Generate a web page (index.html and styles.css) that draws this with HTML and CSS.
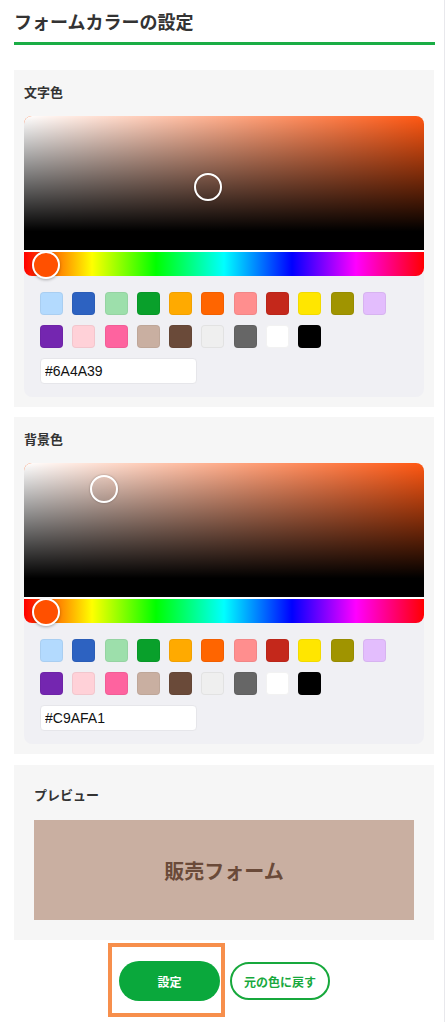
FILE: index.html
```html
<!DOCTYPE html>
<html lang="ja">
<head>
<meta charset="utf-8">
<title>フォームカラーの設定</title>
<link rel="stylesheet" href="styles.css">
</head>
<body>
<div class="page">
  <h1 class="title">フォームカラーの設定</h1>

  <section class="card">
    <h2 class="label">文字色</h2>
    <div class="picker">
      <div class="sat">
        <span class="sat-thumb" style="left:184px; top:71px;"></span>
      </div>
      <div class="hue">
        <span class="hue-thumb"></span>
      </div>
      <div class="swatches">
        <span class="sw" style="background:#b3dafe"></span>
        <span class="sw" style="background:#2d62c1"></span>
        <span class="sw" style="background:#9ddfab"></span>
        <span class="sw" style="background:#09a02b"></span>
        <span class="sw" style="background:#ffaa00"></span>
        <span class="sw" style="background:#ff6500"></span>
        <span class="sw" style="background:#ff8e8e"></span>
        <span class="sw" style="background:#c4281b"></span>
        <span class="sw" style="background:#ffe600"></span>
        <span class="sw" style="background:#a09400"></span>
        <span class="sw" style="background:#e3bdfd"></span>
        <span class="sw" style="background:#7426b0"></span>
        <span class="sw" style="background:#ffd1d8"></span>
        <span class="sw" style="background:#fe639f"></span>
        <span class="sw" style="background:#c9afa1"></span>
        <span class="sw" style="background:#6a4a39"></span>
        <span class="sw" style="background:#efefef"></span>
        <span class="sw" style="background:#666666"></span>
        <span class="sw" style="background:#ffffff"></span>
        <span class="sw" style="background:#000000"></span>
      </div>
      <input class="hex" type="text" value="#6A4A39">
    </div>
  </section>

  <section class="card">
    <h2 class="label">背景色</h2>
    <div class="picker">
      <div class="sat">
        <span class="sat-thumb" style="left:80px; top:26px;"></span>
      </div>
      <div class="hue">
        <span class="hue-thumb"></span>
      </div>
      <div class="swatches">
        <span class="sw" style="background:#b3dafe"></span>
        <span class="sw" style="background:#2d62c1"></span>
        <span class="sw" style="background:#9ddfab"></span>
        <span class="sw" style="background:#09a02b"></span>
        <span class="sw" style="background:#ffaa00"></span>
        <span class="sw" style="background:#ff6500"></span>
        <span class="sw" style="background:#ff8e8e"></span>
        <span class="sw" style="background:#c4281b"></span>
        <span class="sw" style="background:#ffe600"></span>
        <span class="sw" style="background:#a09400"></span>
        <span class="sw" style="background:#e3bdfd"></span>
        <span class="sw" style="background:#7426b0"></span>
        <span class="sw" style="background:#ffd1d8"></span>
        <span class="sw" style="background:#fe639f"></span>
        <span class="sw" style="background:#c9afa1"></span>
        <span class="sw" style="background:#6a4a39"></span>
        <span class="sw" style="background:#efefef"></span>
        <span class="sw" style="background:#666666"></span>
        <span class="sw" style="background:#ffffff"></span>
        <span class="sw" style="background:#000000"></span>
      </div>
      <input class="hex" type="text" value="#C9AFA1">
    </div>
  </section>

  <section class="card card-preview">
    <h2 class="label">プレビュー</h2>
    <div class="preview">販売フォーム</div>
  </section>

  <div class="actions">
    <button class="btn btn-primary" type="button">設定<span class="highlight"></span></button>
    <button class="btn btn-outline" type="button">元の色に戻す</button>
  </div>
</div>
</body>
</html>
```

FILE: styles.css
```css
* { box-sizing: border-box; }

html, body {
  margin: 0;
  padding: 0;
  background: #ffffff;
}

body {
  font-family: "Noto Sans CJK JP", "Noto Sans", sans-serif;
  color: #333333;
}

.page {
  width: 445px;
  min-height: 1022px;
  padding: 0 10px 0 14px;
  border-right: 1px solid #e8e8ec;
}

.title {
  margin: 0 -1px 0 0;
  padding: 8px 0 8px;
  font-size: 18px;
  line-height: 26px;
  font-weight: 700;
  color: #333333;
  border-bottom: 3px solid #1aad45;
}

.card {
  background: #f6f6f6;
  padding: 12px 10px 10px;
  margin-top: 10px;
}

.title + .card { margin-top: 25px; }

.label {
  margin: 0 0 14px;
  font-size: 13px;
  line-height: 20px;
  font-weight: 700;
  color: #333333;
}

.picker {
  background: #f0f0f4;
  border-radius: 8px;
  padding-bottom: 13px;
}

.sat {
  position: relative;
  height: 136px;
  border-radius: 8px 8px 0 0;
  border-bottom: 2px solid #ffffff;
  background:
    linear-gradient(to bottom, rgba(0,0,0,0) 0%, #000000 86%, #000000 100%),
    linear-gradient(to right, #ffffff 0%, rgba(255,255,255,0) 100%),
    #ff5712;
}

.sat-thumb {
  position: absolute;
  width: 28px;
  height: 28px;
  margin: -14px 0 0 -14px;
  border-radius: 50%;
  border: 2px solid #ffffff;
  box-shadow: 0 0 2px rgba(0,0,0,0.35);
  z-index: 1;
}

.hue {
  position: relative;
  height: 24px;
  border-radius: 0 0 8px 8px;
  background: linear-gradient(to right,
    #ff0000 0%, #ffff00 17%, #00ff00 33%, #00ffff 50%,
    #0000ff 67%, #ff00ff 83%, #ff0000 100%);
}

.hue-thumb {
  position: absolute;
  left: 8px;
  top: -1px;
  width: 28px;
  height: 28px;
  border-radius: 50%;
  background: #ff5000;
  border: 2px solid #ffffff;
  box-shadow: 0 1px 3px rgba(0,0,0,0.3);
}

.swatches {
  display: grid;
  grid-template-columns: repeat(11, 23px);
  column-gap: 9.3px;
  row-gap: 10px;
  padding: 16px 16px 0;
}

.sw {
  display: block;
  width: 23px;
  height: 23px;
  border-radius: 4px;
  box-shadow: inset 0 0 0 1px rgba(0,0,0,0.05);
}

.hex {
  display: block;
  margin: 10px 0 0 16px;
  width: 157px;
  height: 26px;
  padding: 0 4px;
  border: 1px solid #e6e6ea;
  border-radius: 4px;
  background: #ffffff;
  font-family: "Liberation Sans", Arial, sans-serif;
  font-size: 14px;
  color: #111111;
  outline: none;
}

.card-preview {
  padding: 20px;
  margin-top: 11px;
}

.card-preview .label {
  margin-bottom: 15px;
}

.preview {
  height: 100px;
  background: #c9afa1;
  color: #6a4a39;
  font-size: 20px;
  font-weight: 700;
  display: flex;
  align-items: center;
  justify-content: center;
}

.actions {
  display: flex;
  justify-content: center;
  align-items: center;
  gap: 10px;
  padding-top: 21px;
  padding-left: 1px;
}

.btn {
  font-family: "Noto Sans CJK JP", "Noto Sans", sans-serif;
  font-size: 12px;
  font-weight: 700;
  border-radius: 20px;
  cursor: pointer;
  padding: 0;
}

.btn-primary {
  position: relative;
  width: 101px;
  height: 40px;
  background: #0aa83c;
  color: #ffffff;
  border: none;
}

.btn-outline {
  width: 100px;
  height: 38px;
  background: #ffffff;
  color: #17a83c;
  border: 2px solid #17a83c;
}

.highlight {
  position: absolute;
  left: -11px;
  right: -5px;
  top: -18px;
  bottom: -16px;
  border: 4px solid #f78f4c;
  border-radius: 0;
  pointer-events: none;
}
```
